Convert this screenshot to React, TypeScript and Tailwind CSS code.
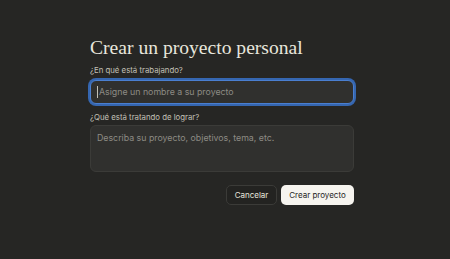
export default function App() {
  return (
    <div className="w-[450px] h-[259px] bg-[#262624] pl-[90px] pt-[35px]" style={{ fontFamily: "Inter, 'Noto Sans', sans-serif" }}>
      <div className="w-[264px] flex flex-col">
        <h1 className="text-[19.6px] leading-[25px] text-[#e8e6dd]" style={{ fontFamily: "'Liberation Serif', 'DejaVu Serif', serif" }}>
          Crear un proyecto personal
        </h1>
        <label className="mt-[5px] text-[7.8px] leading-[11px] text-[#c2c0b6]">¿En qué está trabajando?</label>
        <div className="mt-[4px] h-[24px] rounded-[6px] bg-[#30302e] border border-[#4a7fd0] ring-2 ring-[#3566b0] flex items-center pl-[6px]">
          <span className="w-px h-[12px] bg-[#c2c0b6] mr-[1px]" />
          <span className="text-[8.8px] leading-[12px] text-[#8d8b84]">Asigne un nombre a su proyecto</span>
        </div>
        <label className="mt-[8px] text-[7.8px] leading-[11px] text-[#c2c0b6]">¿Qué está tratando de lograr?</label>
        <div className="mt-[2px] h-[47px] rounded-[6px] bg-[#30302e] border border-[#3b3b38] px-[6px] pt-[6px]">
          <div className="text-[8.8px] leading-[12px] text-[#8d8b84]">Describa su proyecto, objetivos, tema, etc.</div>
        </div>
        <div className="mt-[13px] flex justify-end gap-[4px]">
          <button className="h-[20px] w-[51px] rounded-[5px] border border-[#3b3b38] bg-[#232321] text-[8px] text-[#e8e6dd]">Cancelar</button>
          <button className="h-[20px] w-[73px] rounded-[5px] bg-[#f6f4ef] text-[8px] text-[#1f1e1d]">Crear proyecto</button>
        </div>
      </div>
    </div>
  );
}
